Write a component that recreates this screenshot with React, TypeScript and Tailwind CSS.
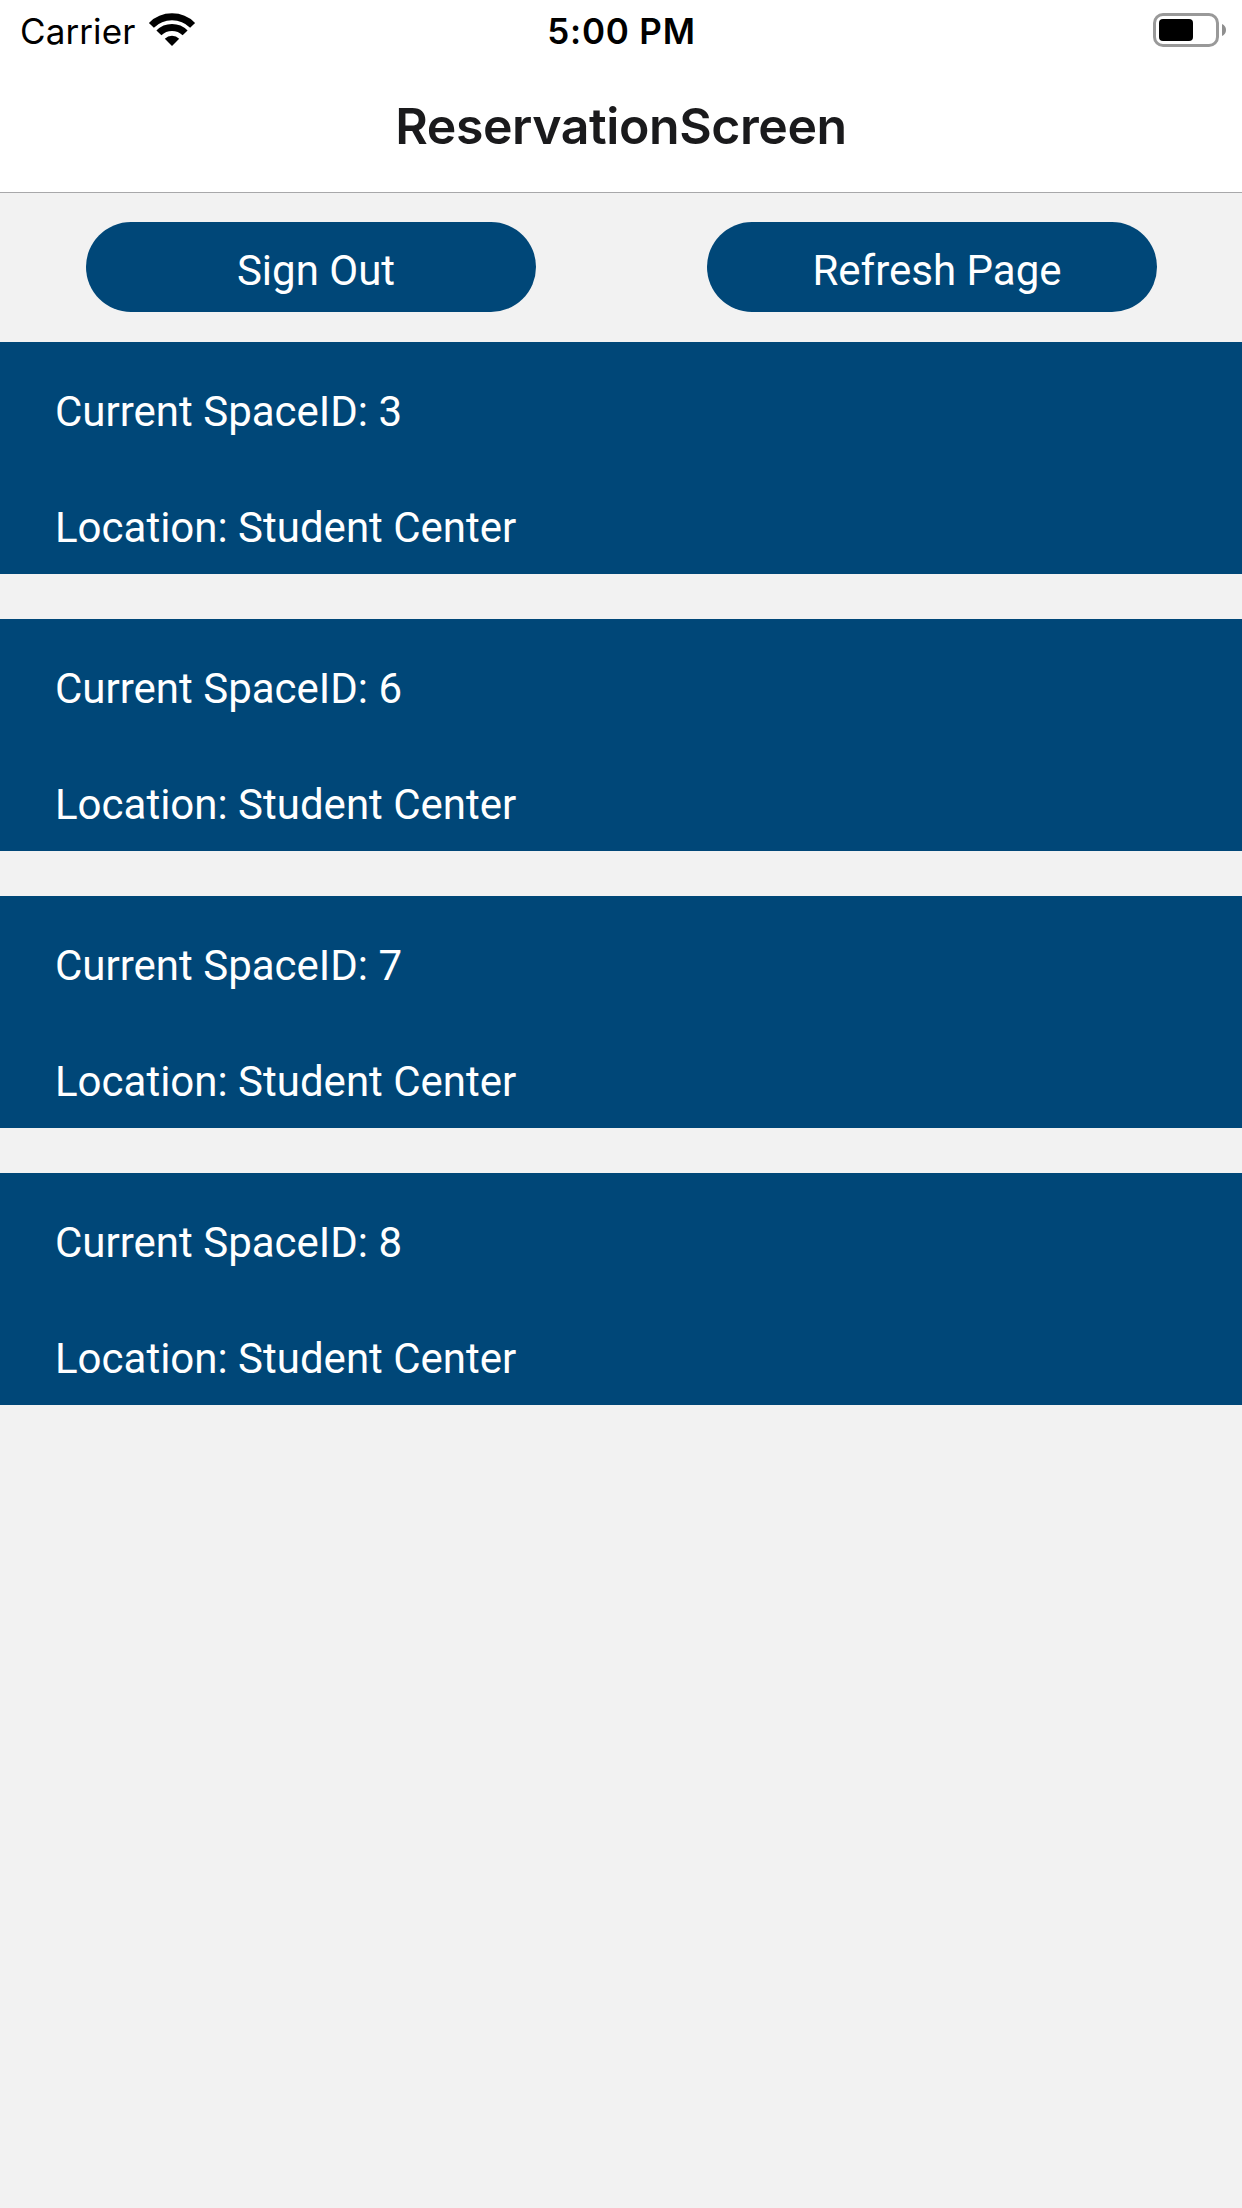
const spaces = [
  { id: 3, location: "Student Center" },
  { id: 6, location: "Student Center" },
  { id: 7, location: "Student Center" },
  { id: 8, location: "Student Center" },
];

function WifiIcon() {
  return (
    <svg className="ml-[13px] h-[36px] w-[48px]" viewBox="0 0 48 36" fill="none">
      <path d="M3.4 13.4a29.1 29.1 0 0 1 41.2 0" stroke="#000" strokeWidth="7" />
      <path d="M10.9 20.9a18.5 18.5 0 0 1 26.2 0" stroke="#000" strokeWidth="7" />
      <path d="M24 34l-7.2-7.2a10.2 10.2 0 0 1 14.4 0z" fill="#000" />
    </svg>
  );
}

function BatteryIcon() {
  return (
    <svg className="h-[34px] w-[74px]" viewBox="0 0 74 34" fill="none">
      <rect x="1.5" y="1.5" width="63" height="31" rx="8.5" stroke="#999" strokeWidth="3" />
      <rect x="6" y="6" width="34" height="22" rx="4" fill="#000" />
      <path d="M69 11c2.6 1 4 3.4 4 6s-1.4 5-4 6z" fill="#8f8f8f" />
    </svg>
  );
}

export default function App() {
  return (
    <div className="flex h-[2208px] w-[1242px] flex-col overflow-hidden bg-[#f2f2f2]">
      <header className="h-[193px] border-b border-[#a8a8aa] bg-white font-['Inter',sans-serif]">
        <div className="grid h-[60px] grid-cols-3 items-center text-[35px] leading-[58px] text-black">
          <div className="flex items-center pl-[20px]">
            <span className="pt-[2px] tracking-[0.1px]">Carrier</span>
            <WifiIcon />
          </div>
          <div className="pt-[2px] pl-px text-center font-[560] tracking-[0.8px]">5:00 PM</div>
          <div className="flex justify-end pr-[15px]">
            <BatteryIcon />
          </div>
        </div>
        <h1 className="pt-[34px] text-center text-[50px] leading-[64px] font-semibold tracking-[-0.42px] text-[#1a1a1c]">
          ReservationScreen
        </h1>
      </header>
      <main className="font-['Roboto',sans-serif] text-[42px] leading-[50px] text-white">
        <div className="flex h-[149px] items-start justify-around pt-[29px]">
          {["Sign Out", "Refresh Page"].map((label) => (
            <button key={label} className="h-[90px] w-[450px] rounded-full bg-[#004778] pt-[8px] pl-[11px]">
              {label}
            </button>
          ))}
        </div>
        <ul className="flex flex-col gap-[45px]">
          {spaces.map((space) => (
            <li key={space.id} className="flex h-[232px] flex-col gap-[66px] bg-[#004778] pt-[45px] pl-[55px]">
              <p>Current SpaceID: {space.id}</p>
              <p>Location: {space.location}</p>
            </li>
          ))}
        </ul>
      </main>
    </div>
  );
}
